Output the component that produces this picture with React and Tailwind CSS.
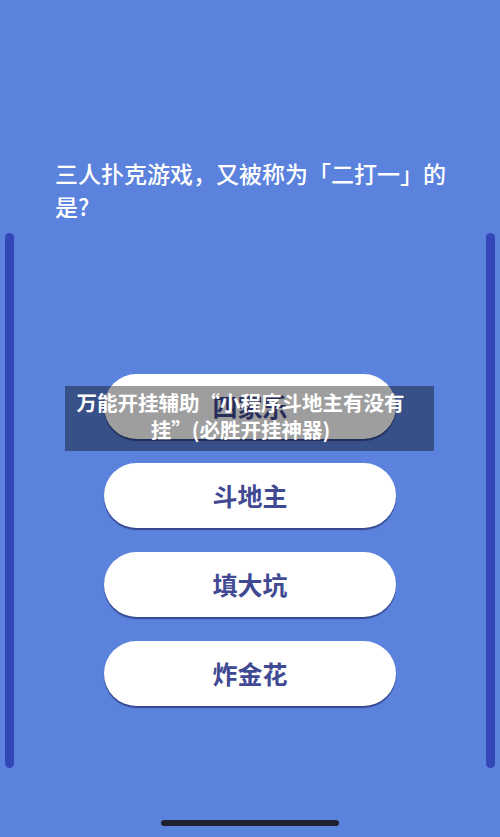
import React from "react";

const CJK = { fontFamily: '"Noto Sans CJK SC", "Noto Sans", sans-serif' };

const options = ["四家乐", "斗地主", "填大坑", "炸金花"];

function OptionButton({ label }) {
  return (
    <div className="flex h-[65px] w-[292px] items-center justify-center rounded-full bg-white shadow-[0_2px_1px_rgba(40,52,120,0.75)]">
      <span className="text-[25px] font-bold leading-none text-[#3f4a92]">{label}</span>
    </div>
  );
}

export default function App() {
  return (
    <div lang="zh-CN" style={CJK} className="relative flex h-[837px] w-full flex-col overflow-hidden bg-[#5b82dc]">
      {/* question */}
      <div className="pl-[55px] pr-[50px] pt-[157px] text-[23px] font-medium leading-[33px] text-white">
        三人扑克游戏，又被称为「二打一」的是?
      </div>

      {/* answer panel framed by the two side rails */}
      <div className="mt-[10px] flex h-[535px]">
        <div className="ml-[5px] w-[9px] rounded-full bg-[#3447b8]" />
        <div className="flex flex-1 flex-col items-center gap-[24px] pt-[141px]">
          {options.map((o) => (
            <OptionButton key={o} label={o} />
          ))}
        </div>
        <div className="mr-[5px] w-[9px] rounded-full bg-[#3447b8]" />
      </div>

      {/* home indicator */}
      <div className="mt-[52px] flex justify-center">
        <div className="h-[6px] w-[178px] rounded-full bg-[#1f2130]" />
      </div>

      {/* caption banner */}
      <div className="absolute left-[65px] top-[386px] h-[65px] w-[369px] bg-black/[0.38] pl-[6px] pr-[24px] pt-[3px] text-center text-[20.5px] font-bold leading-[27px] text-white">
        万能开挂辅助“小程序斗地主有没有挂”(必胜开挂神器)
      </div>
    </div>
  );
}
